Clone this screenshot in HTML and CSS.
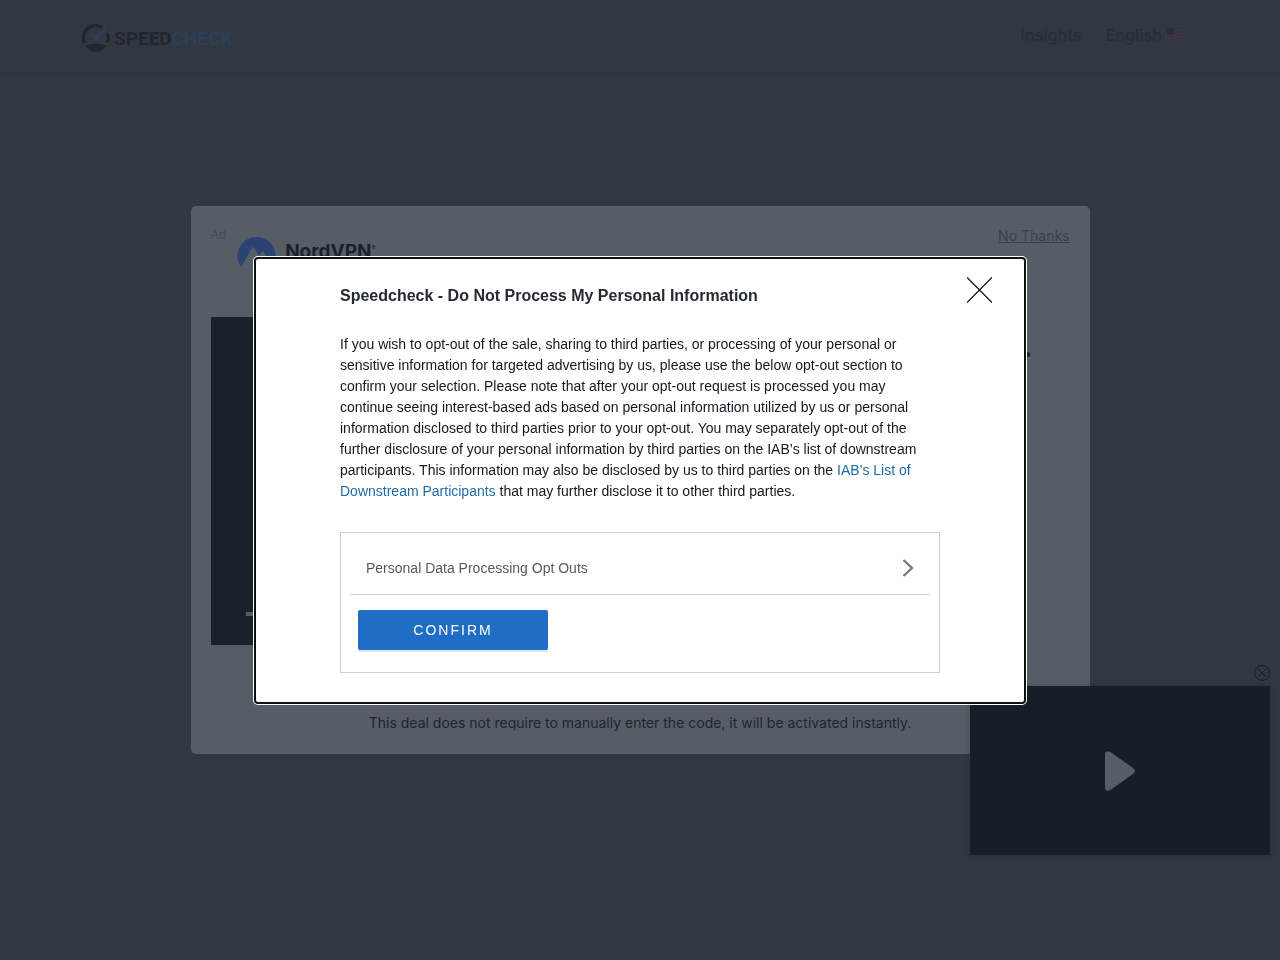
FILE: index.html
```html
<!DOCTYPE html>
<html lang="en">
<head>
    <meta charset="UTF-8">
    <meta name="viewport" content="width=device-width, initial-scale=1.0">
    <title>Speedcheck</title>
    <link rel="stylesheet" href="styles.css">
</head>
<body>
    <header class="navbar">
        <a class="logo" href="#">
            <svg width="28" height="28" viewBox="0 0 28 28" fill="none">
                <path d="M2.500 19A12.200 12.200 0 0 1 20 3.500" stroke="#20262f" stroke-width="3.400"/>
                <path d="M25 9A12.200 12.200 0 0 1 25.500 18.500" stroke="#20262f" stroke-width="3.400"/>
                <path d="M3.500 21.500Q14 18 24.500 21.500Q20.500 28 14 28Q7.500 28 3.500 21.500Z" fill="#20262f"/>
                <path d="M9.500 10L14 14.500L23.500 4.500" stroke="#2b4058" stroke-width="3"/>
            </svg>
            <span class="logo-text">SPEED<span class="logo-check">CHECK</span></span>
        </a>
        <nav class="nav-links">
            <a href="#">Insights</a>
            <a href="#">English
                <svg class="flag" width="19" height="14" viewBox="0 0 19 14">
                    <path d="M0 1Q5 -1 10 1T19 1V13Q14 15 9 13T0 13Z" fill="#3b3943"/>
                    <path d="M0 3.500Q5 2 10 3.500T19 3.500M0 6.500Q5 5 10 6.500T19 6.500M0 9.500Q5 8 10 9.500T19 9.500M0 12Q5 11 10 12T19 12" stroke="#362f39" fill="none"/>
                    <path d="M0 1Q4 -.5 8 .5V7Q4 6 0 7Z" fill="#282d3b"/>
                </svg>
            </a>
        </nav>
    </header>

    <main>
        <section class="offer">
            <div class="offer-top">
                <span class="ad-label">Ad</span>
                <div class="brand">
                    <svg width="39" height="39" viewBox="0 0 39 39">
                        <path d="M4 31A19 19 0 1 1 35 31L25.500 15L22 20L24 23L16 10.500Z" fill="#2b4373"/>
                        <path d="M16 14L13 20L16 18L18 20L19 19Z" fill="#575d66"/>
                    </svg>
                    <span class="brand-name">NordVPN<sup>®</sup></span>
                </div>
                <a class="no-thanks" href="#">No Thanks</a>
            </div>
            <div class="offer-body">
                <div class="offer-art">
                    <svg width="18" height="18" viewBox="0 0 18 18">
                        <path d="M0 9H17M9 1V17" stroke="#575d66" stroke-width="4"/>
                    </svg>
                </div>
                <h2 class="offer-title">.</h2>
            </div>
            <p class="offer-note">This deal does not require to manually enter the code, it will be activated instantly.</p>
        </section>
    </main>

    <!-- Floating video -->
    <aside class="player">
        <button class="player-close" aria-label="Close video">
            <svg width="16" height="16" viewBox="0 0 16 16" fill="none" stroke="#191f28">
                <circle cx="8" cy="8" r="7.500"/>
                <path d="M4 4L12 12M12 4L4 12"/>
            </svg>
        </button>
        <button class="player-video" aria-label="Play">
            <svg width="30" height="40" viewBox="0 0 30 40" fill="#575d66">
                <path d="M0 4Q0 -1 5 .8L28 17Q32 20 28 23L5 39.200Q0 41 0 36Z"/>
            </svg>
        </button>
    </aside>

    <!-- Privacy dialog -->
    <div class="overlay">
        <div class="popup" role="dialog" aria-labelledby="popup-title">
            <button class="popup-close" aria-label="Close">
                <svg width="25" height="26" viewBox="0 0 25 26" stroke="#000" stroke-width="1.200">
                    <path d="M0 .5L25 25.500M25 .5L0 25.500"/>
                </svg>
            </button>
            <h1 id="popup-title">Speedcheck - Do Not Process My Personal Information</h1>
            <p>If you wish to opt-out of the sale, sharing to third parties, or processing of your personal or sensitive information for targeted advertising by us, please use the below opt-out section to confirm your selection. Please note that after your opt-out request is processed you may continue seeing interest-based ads based on personal information utilized by us or personal information disclosed to third parties prior to your opt-out. You may separately opt-out of the further disclosure of your personal information by third parties on the IAB’s list of downstream participants. This information may also be disclosed by us to third parties on the <a href="#">IAB’s List of Downstream Participants</a> that may further disclose it to other third parties.</p>
            <div class="options">
                <button class="option-row">
                    <span>Personal Data Processing Opt Outs</span>
                    <svg width="12" height="18" viewBox="0 0 12 18" fill="none" stroke="#777" stroke-width="2.300">
                        <path d="M1.500 1L10 9L1.500 17"/>
                    </svg>
                </button>
                <button class="confirm">CONFIRM</button>
            </div>
        </div>
    </div>
</body>
</html>
```

FILE: styles.css
```css
* {
    margin: 0;
    padding: 0;
    box-sizing: border-box;
}

body {
    background-color: #323842;
    font-family: Inter, sans-serif;
    color: #20262f;
    min-height: 100vh;
}

button {
    border: none;
    background: none;
    cursor: pointer;
}

svg {
    display: block;
}

.navbar {
    display: flex;
    justify-content: space-between;
    height: 74px;
    padding: 24px 94px 0 82px;
    border-bottom: 1px solid #2e343e;
}

.logo {
    display: flex;
    gap: 4px;
    height: 28px;
    align-items: center;
    text-decoration: none;
}

.logo-text {
    font-family: Roboto, sans-serif;
    font-size: 19px;
    font-weight: bold;
    color: #20262f;
}

.logo-check {
    color: #2b4058;
}

.nav-links {
    display: flex;
    gap: 24px;
}

.nav-links a {
    display: flex;
    gap: 5px;
    height: 22px;
    align-items: center;
    font-size: 16px;
    font-weight: 600;
    color: #282e38;
    text-decoration: none;
}

.offer {
    display: flex;
    flex-direction: column;
    max-width: 899px;
    min-height: 548px;
    margin: 132px auto 0;
    padding: 20px;
    background-color: #575d66;
    border-radius: 5px;
}

.offer-top {
    display: flex;
    height: 91px;
}

.ad-label {
    font-size: 12px;
    line-height: 18px;
    color: #454b55;
}

.brand {
    display: flex;
    gap: 9px;
    padding: 10px 11px;
}

.brand-name {
    font-size: 19px;
    font-weight: 700;
    line-height: 32px;
    color: #1b212b;
}

.brand-name sup {
    font-size: 6px;
    line-height: 0;
    vertical-align: 8px;
}

.no-thanks {
    margin-left: auto;
    font-size: 14px;
    line-height: 20px;
    color: #3a404a;
}

.offer-body {
    display: flex;
    justify-content: space-between;
}

.offer-art {
    display: flex;
    align-items: flex-end;
    width: 50%;
    height: 328px;
    padding: 0 35px 22px;
    background-color: #1b212b;
}

.offer-title {
    padding: 14px 37px;
    font-size: 28px;
    line-height: 32px;
}

.offer-note {
    margin-top: 68px;
    font-size: 14px;
    line-height: 20px;
    text-align: center;
}

.player {
    position: fixed;
    right: 10px;
    bottom: 105px;
    width: 300px;
}

.player-close {
    display: block;
    margin: 0 0 5px auto;
}

.player-video {
    display: flex;
    align-items: center;
    justify-content: center;
    width: 100%;
    height: 169px;
    background-color: #181e27;
    box-shadow: 0 0 6px rgba(0, 0, 0, 0.2);
}

.overlay {
    position: fixed;
    top: 0;
    left: 0;
    width: 100%;
    height: 100%;
    display: flex;
    align-items: center;
    justify-content: center;
}

.popup {
    position: relative;
    width: 100%;
    max-width: 772px;
    padding: 25px 84px 29px;
    background-color: white;
    border: 2px solid #101010;
    border-radius: 4px;
    box-shadow: 0 0 0 1px white;
    font-family: "Liberation Sans", sans-serif;
}

.popup h1 {
    font-size: 16px;
    line-height: 24px;
    color: #252a31;
}

.popup p {
    margin: 26px 0 30px;
    font-size: 14px;
    line-height: 21px;
    color: #14191f;
}

.popup p a {
    color: #1f6ba5;
    text-decoration: none;
}

.popup-close {
    position: absolute;
    top: 18px;
    right: 32px;
}

.options {
    padding: 0 9px 22px;
    border: 1px solid #d0d0d0;
}

.option-row {
    display: flex;
    align-items: center;
    justify-content: space-between;
    width: 100%;
    padding: 25px 16px 15px;
    border-bottom: 1px solid #d0d0d0;
    font-family: inherit;
    font-size: 14px;
    line-height: 21px;
    color: #555a60;
}

.confirm {
    display: block;
    width: 190px;
    height: 40px;
    margin: 15px 8px 0;
    background-color: #206dc5;
    border-radius: 2px;
    box-shadow: 0 2px 0 #dbe6f4;
    color: white;
    font-family: inherit;
    font-size: 14px;
    letter-spacing: 2px;
}

@media (max-width: 700px) {
    .popup {
        padding: 50px 20px 29px;
    }

    .navbar {
        padding: 24px 20px 0;
    }
}
```
